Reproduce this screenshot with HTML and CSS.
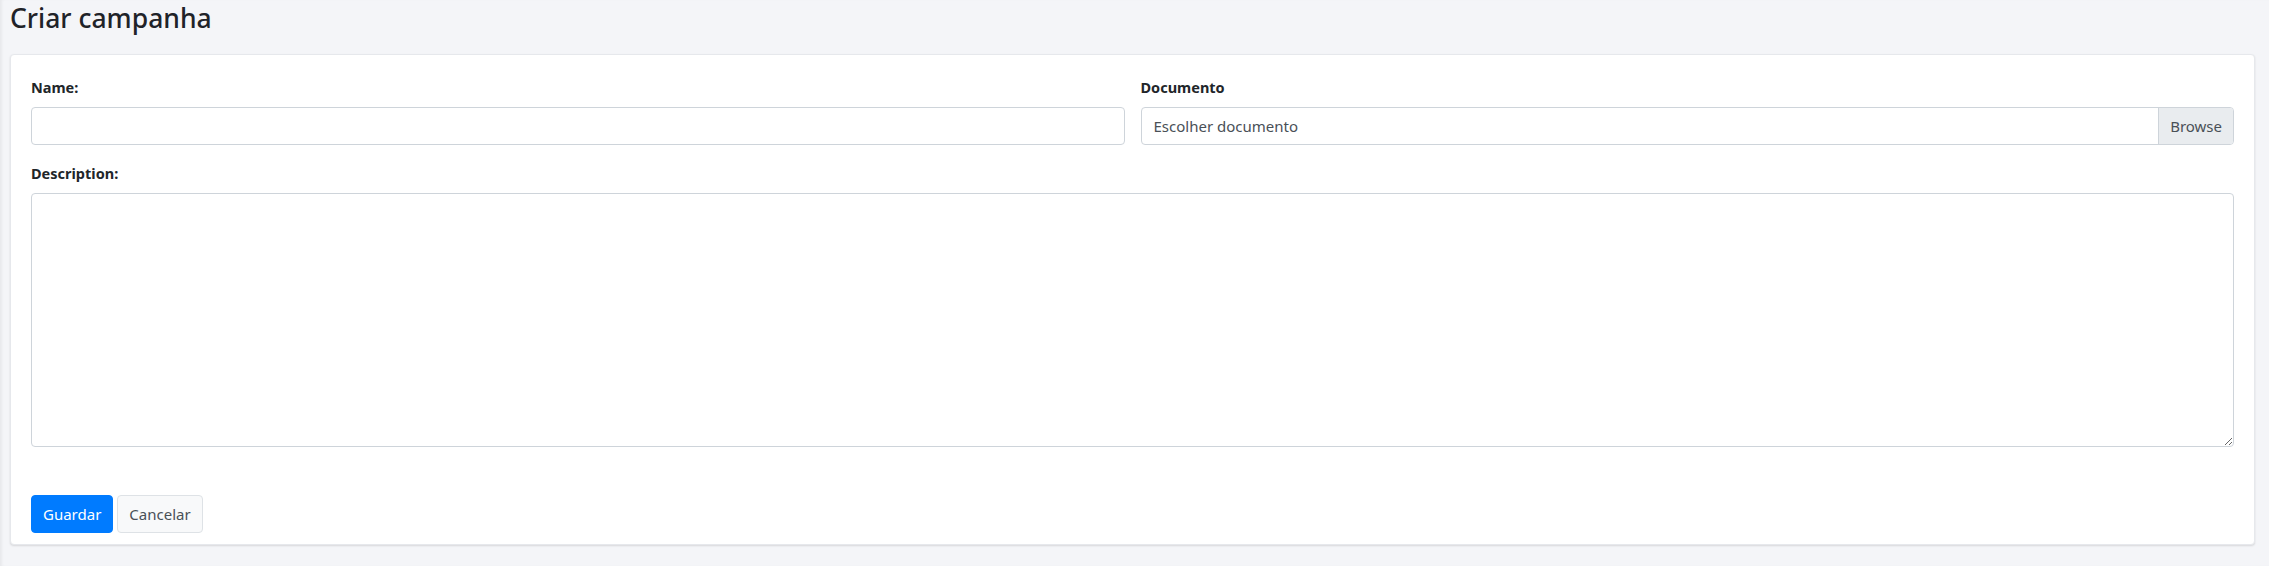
FILE: index.html
```html
<!DOCTYPE html>
<html lang="pt">
<head>
<meta charset="utf-8">
<title>Criar campanha</title>
<link rel="stylesheet" href="styles.css">
</head>
<body>
<main class="page">
  <h3 class="page-title">Criar campanha</h3>
  <section class="card">
    <form class="form">
      <div class="row">
        <div class="field">
          <label class="label" for="name">Name:</label>
          <input class="input" id="name" type="text">
        </div>
        <div class="field">
          <label class="label" for="doc">Documento</label>
          <div class="file">
            <span class="file-text">Escolher documento</span>
            <span class="file-btn">Browse</span>
          </div>
        </div>
      </div>
      <div class="field field-full">
        <label class="label" for="desc">Description:</label>
        <textarea class="textarea" id="desc"></textarea>
      </div>
      <div class="actions">
        <button type="button" class="btn btn-primary">Guardar</button>
        <button type="button" class="btn btn-light">Cancelar</button>
      </div>
    </form>
  </section>
</main>
</body>
</html>
```

FILE: styles.css
```css
* { box-sizing: border-box; }
html, body { margin: 0; height: 100%; }
body {
  background: #f4f5f8;
  font-family: "Noto Sans", "Open Sans", Arial, sans-serif;
  font-size: 15px;
  color: #212529;
  box-shadow: inset 3px 0 3px -1px rgba(0,0,0,0.05);
}
.page {
  padding: 0 14px 0 10px;
}
.page-title {
  margin: 0 0 19px 0;
  font-size: 26.5px;
  line-height: 34px;
  font-weight: 500;
  color: #1f2329;
  padding-top: 1px;
}
.card {
  background: #fff;
  border: 1px solid #e6e8ec;
  border-radius: 4px;
  box-shadow: 0 1px 2px rgba(0,0,0,0.12);
  padding: 22px 20px 11px 20px;
}
.row {
  display: grid;
  grid-template-columns: 1fr 1fr;
  column-gap: 16px;
}
.field { margin-bottom: 18px; display: flex; flex-direction: column; }
.label {
  font-size: 14.5px;
  font-weight: 700;
  line-height: 21px;
  margin-bottom: 9px;
  color: #212529;
}
.input, .textarea, .file {
  border: 1px solid #ced4da;
  border-radius: 4px;
  background: #fff;
  font: inherit;
}
.input { height: 38px; padding: 0 12px; }
.file {
  height: 38px;
  display: flex;
  align-items: stretch;
  overflow: hidden;
}
.file-text {
  flex: 1;
  display: flex;
  align-items: center;
  padding: 0 12px;
  color: #495057;
}
.file-btn {
  display: flex;
  align-items: center;
  padding: 0 11px;
  background: #e9ecef;
  border-left: 1px solid #ced4da;
  color: #495057;
}
.textarea {
  height: 254px;
  resize: vertical;
  padding: 6px 12px;
  margin-bottom: 30px;
}
.field-full { margin-bottom: 18px; }
.actions { display: flex; gap: 4px; }
.btn {
  height: 38px;
  padding: 0 11px;
  border-radius: 4px;
  font: inherit;
  border: 1px solid transparent;
}
.btn-primary { background: #007bff; color: #fff; border-color: #007bff; }
.btn-light { background: #f8f9fa; color: #495057; border-color: #dee2e6; }
```
